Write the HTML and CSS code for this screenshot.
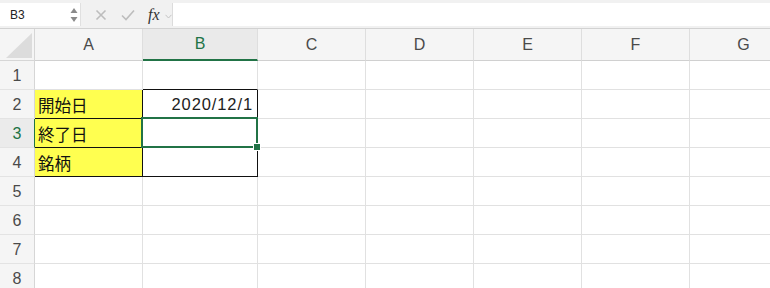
FILE: index.html
```html
<!DOCTYPE html>
<html lang="ja">
<head>
<meta charset="utf-8">
<link rel="stylesheet" href="styles.css">
</head>
<body>
<div class="topbar">
  <div class="namebox">
    <span class="ref">B3</span>
    <span class="stepper">
      <svg width="8" height="16" viewBox="0 0 8 16"><path d="M4 1 L7.5 6 L0.5 6 Z" fill="#8a8a8a"/><path d="M0.5 10 L7.5 10 L4 15 Z" fill="#8a8a8a"/></svg>
    </span>
  </div>
  <div class="fbtns">
    <svg class="ico" width="12" height="12" viewBox="0 0 12 12"><path d="M1.5 1.5 L10.5 10.5 M10.5 1.5 L1.5 10.5" stroke="#bdbdbd" stroke-width="1.6" fill="none"/></svg>
    <svg class="ico" width="14" height="12" viewBox="0 0 14 12"><path d="M1 6.5 L5 10.5 L13 1.5" stroke="#bdbdbd" stroke-width="1.6" fill="none"/></svg>
    <span class="fx">fx</span>
    <svg class="chev" width="7" height="5" viewBox="0 0 7 5"><path d="M0.5 0.8 L3.5 4 L6.5 0.8" stroke="#c4c4c4" stroke-width="1" fill="none"/></svg>
  </div>
  <div class="formula"></div>
</div>
<div class="sheet">
  <div class="corner"><svg width="26" height="25" viewBox="0 0 26 25"><path d="M26 0 L26 25 L0 25 Z" fill="#dcdcdc"/></svg></div>
  <div class="ch">A</div>
  <div class="ch sel">B</div>
  <div class="ch">C</div>
  <div class="ch">D</div>
  <div class="ch">E</div>
  <div class="ch">F</div>
  <div class="ch">G</div>

  <div class="rh">1</div>
  <div class="c"></div><div class="c bb"></div><div class="c"></div><div class="c"></div><div class="c"></div><div class="c"></div><div class="c"></div>

  <div class="rh">2</div>
  <div class="c y bk-r bk-b">開始日</div><div class="c num bk-r bk-b">2020/12/1</div><div class="c"></div><div class="c"></div><div class="c"></div><div class="c"></div><div class="c"></div>

  <div class="rh rsel">3</div>
  <div class="c y bk-r bk-b">終了日</div><div class="c bk-r bk-b active"></div><div class="c"></div><div class="c"></div><div class="c"></div><div class="c"></div><div class="c"></div>

  <div class="rh">4</div>
  <div class="c y bk-r bk-b">銘柄</div><div class="c bk-r bk-b"></div><div class="c"></div><div class="c"></div><div class="c"></div><div class="c"></div><div class="c"></div>

  <div class="rh">5</div>
  <div class="c"></div><div class="c"></div><div class="c"></div><div class="c"></div><div class="c"></div><div class="c"></div><div class="c"></div>

  <div class="rh">6</div>
  <div class="c"></div><div class="c"></div><div class="c"></div><div class="c"></div><div class="c"></div><div class="c"></div><div class="c"></div>

  <div class="rh">7</div>
  <div class="c"></div><div class="c"></div><div class="c"></div><div class="c"></div><div class="c"></div><div class="c"></div><div class="c"></div>

  <div class="rh">8</div>
  <div class="c"></div><div class="c"></div><div class="c"></div><div class="c"></div><div class="c"></div><div class="c"></div><div class="c"></div>
</div>
</body>
</html>
```

FILE: styles.css
```css
* { box-sizing: border-box; }
html, body {
  margin: 0;
  padding: 0;
  width: 770px;
  height: 288px;
  overflow: hidden;
  background: #ffffff;
  font-family: "Liberation Sans", "Noto Sans CJK JP", sans-serif;
}
.topbar {
  display: flex;
  height: 29px;
  background: #f1f1f1;
  border-bottom: 1px solid #d2d2d2;
  padding-top: 3px;
  padding-bottom: 2px;
}
.namebox {
  width: 81px;
  height: 23px;
  background: #ffffff;
  display: flex;
  align-items: center;
  justify-content: space-between;
  padding: 0 1px 0 10px;
  border-right: 1px solid #e0e0e0;
}
.ref {
  font-size: 12px;
  color: #222;
}
.stepper {
  display: flex;
  width: 8px;
  margin-right: 1px;
}
.fbtns {
  width: 91px;
  display: flex;
  align-items: center;
  padding-left: 14px;
}
.fbtns .ico { margin-right: 14px; }
.fx {
  font-family: "Liberation Serif", "DejaVu Serif", serif;
  font-style: italic;
  font-size: 16px;
  color: #333;
  margin-left: -1px;
  margin-right: 5px;
}
.chev { margin-top: 3px; }
.formula {
  flex: 1;
  height: 23px;
  background: #ffffff;
  border-left: 1px solid #dcdcdc;
}
.sheet {
  display: grid;
  grid-template-columns: 35px 108px 115px 108px 108px 108px 108px 108px;
  grid-template-rows: 32px repeat(8, 29px);
}
.corner {
  background: #f5f5f5;
  border-right: 1px solid #d6d6d6;
  border-bottom: 1px solid #d6d6d6;
  display: flex;
  align-items: flex-end;
  justify-content: flex-end;
  padding: 0 2px 2px 0;
}
.ch {
  background: #f5f5f5;
  border-right: 1px solid #dedede;
  border-bottom: 1px solid #d0d0d0;
  display: flex;
  align-items: center;
  justify-content: center;
  font-size: 16px;
  color: #4a4a4a;
}
.ch.sel {
  background: #eaeaea;
  color: #217346;
  border-bottom: 2px solid #217346;
}
.rh {
  background: #f5f5f5;
  border-right: 1px solid #d6d6d6;
  border-bottom: 1px solid #e3e3e3;
  display: flex;
  align-items: center;
  justify-content: center;
  font-size: 16px;
  color: #4a4a4a;
  padding-top: 1px;
}
.rh.rsel {
  background: #ebebeb;
  color: #217346;
  border-right: 1px solid #217346;
}
.c {
  border-right: 1px solid #e1e1e1;
  border-bottom: 1px solid #e1e1e1;
  display: flex;
  align-items: center;
  font-family: "Noto Sans CJK JP", sans-serif;
  font-size: 16.5px;
  color: #111;
  padding: 1px 3px 0 3px;
}
.c.y { background: #ffff50; }
.c.bb { border-bottom: 1px solid #111; }
.c.bk-r { border-right: 1px solid #111; }
.c.bk-b { border-bottom: 1px solid #111; }
.c.num {
  justify-content: flex-end;
  font-family: "Liberation Sans", sans-serif;
  font-size: 16.5px;
  letter-spacing: 0.9px;
  padding-right: 4px;
  color: #222;
}
.c.active { position: relative; }
.c.active::after {
  content: "";
  position: absolute;
  left: -2px;
  top: -2px;
  right: -1px;
  bottom: -1px;
  border: 2px solid #217346;
}
.c.active::before {
  content: "";
  position: absolute;
  right: -4px;
  bottom: -4px;
  width: 6px;
  height: 6px;
  background: #217346;
  border: 1px solid #ffffff;
  z-index: 2;
}
```
